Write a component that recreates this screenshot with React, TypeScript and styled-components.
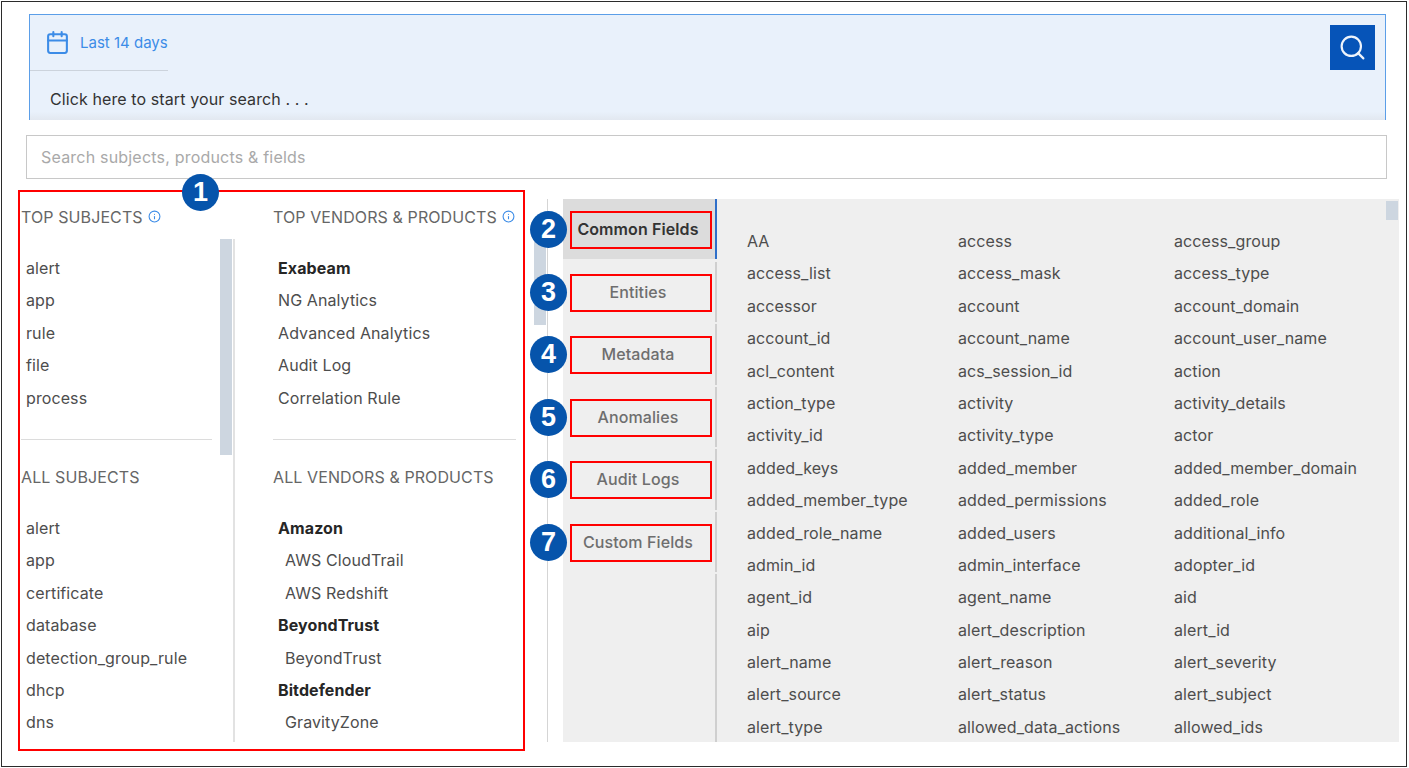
import React from 'react';
import styled, { createGlobalStyle } from 'styled-components';
import { Calendar, Info, Search } from 'lucide-react';

const GlobalStyle = createGlobalStyle`
  * { box-sizing: border-box; }
  html, body { margin: 0; padding: 0; background: #fff; }
  body { font-family: Inter, "Noto Sans", "Liberation Sans", sans-serif; font-size: 16px; letter-spacing: .1px; }
`;

const Frame = styled.div`
  width: 1406px;
  height: 766px;
  margin: 1px;
  padding-top: 12px;
  border: 1px solid #2b2b2b;
  overflow: hidden;
`;

const Header = styled.header`
  display: flex;
  justify-content: space-between;
  align-items: flex-start;
  width: 1357px;
  height: 106px;
  margin-left: 27px;
  border: 1px solid #5b9ee8;
  border-bottom: 0;
  background: linear-gradient(#e9f1fb 92%, #e2e8f0);
`;

const QueryBlock = styled.div`
  display: flex;
  flex-direction: column;
`;

const DateRow = styled.div`
  display: flex;
  align-items: center;
  gap: 10px;
  width: 138px;
  height: 56px;
  padding: 0 0 1px 15px;
  border-bottom: 1px solid #ccd3dc;
  color: #3c8ce7;
  font-size: 15px;
  letter-spacing: 0;
  white-space: nowrap;
`;

const QueryHint = styled.div`
  margin-top: 18px;
  padding-left: 20px;
  color: #333;
  line-height: 21px;
  white-space: nowrap;
`;

const SearchButton = styled.button`
  display: flex;
  align-items: center;
  justify-content: center;
  width: 45px;
  height: 45px;
  margin: 10px 10px 0 0;
  padding: 0;
  border: 0;
  background: #0654b8;
  color: #eef4fb;
`;

const FilterInput = styled.input`
  display: block;
  width: 1361px;
  height: 44px;
  margin: 15px 0 0 24px;
  padding: 0 14px;
  border: 1px solid #c8c8c8;
  outline: 0;
  font: inherit;
  letter-spacing: .2px;
  &::placeholder { color: #a9a9a9; opacity: 1; }
`;

const Body = styled.div`
  display: flex;
  align-items: flex-start;
  margin-top: 11px;
  padding-left: 16px;
`;

const RedBox = styled.section`
  position: relative;
  display: grid;
  grid-template-columns: 215px 1fr;
  flex: none;
  width: 507px;
  height: 561px;
  border: 2px solid #f00;
`;

const Badge = styled.span<{ $x: number; $y: number }>`
  position: absolute;
  left: ${(p) => p.$x}px;
  top: ${(p) => p.$y}px;
  z-index: 2;
  display: flex;
  align-items: center;
  justify-content: center;
  width: 37px;
  height: 37px;
  border-radius: 50%;
  background: #0654ab;
  color: #fff;
  font-family: "Liberation Sans", Arial, sans-serif;
  font-size: 27px;
  font-weight: 700;
  letter-spacing: 0;
  line-height: 1;
`;

const PickerColumn = styled.div<{ $inset: number }>`
  display: flex;
  flex-direction: column;
  min-width: 0;
  padding-left: ${(p) => p.$inset}px;
`;

const TopHeading = styled.h3`
  display: flex;
  align-items: center;
  gap: 5px;
  height: 47px;
  margin: 0;
  padding-top: 2px;
  color: #666;
  font-size: 16px;
  font-weight: 400;
  white-space: nowrap;
  svg { color: #3c8ce7; }
`;

const ScrollArea = styled.div<{ $rule?: boolean }>`
  position: relative;
  height: 503px;
  padding-top: 13px;
  overflow: hidden;
  border-right: ${(p) => (p.$rule ? '2px solid #e2e2e2' : '0')};
`;

const Thumb = styled.div`
  position: absolute;
  top: 0;
  right: 1px;
  width: 12px;
  height: 216px;
  background: #cdd6e0;
`;

const PickRow = styled.div<{ $bold?: boolean; $nested?: boolean }>`
  height: 32.4px;
  padding-left: ${(p) => (p.$nested ? 12 : 5)}px;
  color: ${(p) => (p.$bold ? '#262626' : '#4d4d4d')};
  font-weight: ${(p) => (p.$bold ? 700 : 400)};
  line-height: 32.4px;
  white-space: nowrap;
`;

const Rule = styled.hr<{ $width: number }>`
  width: ${(p) => p.$width}px;
  height: 1px;
  margin: 25px 0 0;
  border: 0;
  background: #dcdcdc;
`;

const AllHeading = styled.h3`
  height: 20px;
  margin: 27px 0 25px;
  color: #666;
  font-size: 16px;
  font-weight: 400;
  line-height: 20px;
  white-space: nowrap;
`;

const MiddleRail = styled.div`
  flex: none;
  width: 14px;
  height: 543px;
  margin: 9px 0 0 9px;
  padding-top: 26px;
  border-right: 1px solid #d5d5d5;
`;

const RailThumb = styled.div`
  width: 12px;
  height: 100px;
  background: #cdd6e0;
`;

const Panel = styled.section`
  position: relative;
  display: flex;
  flex: none;
  width: 836px;
  height: 543px;
  margin: 9px 0 0 15px;
  background: #efefef;
`;

const TabColumn = styled.nav`
  display: flex;
  flex-direction: column;
  flex: none;
  gap: 2.2px;
  width: 154px;
`;

const Tab = styled.div<{ $active?: boolean }>`
  position: relative;
  height: 60.4px;
  padding: 12px 3px 0 7px;
  border-right: 2px solid ${(p) => (p.$active ? '#2f6fc9' : '#cfcfcf')};
  background: ${(p) => (p.$active ? '#dcdcdc' : 'transparent')};
`;

const TabFiller = styled.div`
  flex: 1;
  border-right: 2px solid #cfcfcf;
`;

const TabLabel = styled.div<{ $active?: boolean }>`
  display: flex;
  align-items: center;
  justify-content: center;
  height: 38px;
  padding: 0 6px 2px 0;
  border: 2px solid #f00;
  color: ${(p) => (p.$active ? '#333' : '#6e6e6e')};
  font-weight: ${(p) => (p.$active ? 600 : 500)};
  white-space: nowrap;
`;

const FieldGrid = styled.div`
  display: grid;
  grid-template-columns: 211px 216px 1fr;
  grid-auto-rows: 32.4px;
  flex: 1;
  min-width: 0;
  padding: 26px 0 0 30px;
  overflow: hidden;
`;

const Field = styled.div`
  color: #4d4d4d;
  line-height: 32.4px;
  white-space: nowrap;
`;

const PanelThumb = styled.div`
  position: absolute;
  top: 2px;
  right: 1px;
  width: 12px;
  height: 19px;
  background: #cdd6e0;
`;

const topSubjects = ['alert', 'app', 'rule', 'file', 'process'];
const allSubjects = ['alert', 'app', 'certificate', 'database', 'detection_group_rule', 'dhcp', 'dns'];
const topVendors = [
  { name: 'Exabeam', bold: true },
  { name: 'NG Analytics' },
  { name: 'Advanced Analytics' },
  { name: 'Audit Log' },
  { name: 'Correlation Rule' },
];
const allVendors = [
  { name: 'Amazon', bold: true },
  { name: 'AWS CloudTrail', nested: true },
  { name: 'AWS Redshift', nested: true },
  { name: 'BeyondTrust', bold: true },
  { name: 'BeyondTrust', nested: true },
  { name: 'Bitdefender', bold: true },
  { name: 'GravityZone', nested: true },
];
const tabs = ['Common Fields', 'Entities', 'Metadata', 'Anomalies', 'Audit Logs', 'Custom Fields'];
const fields = [
  'AA', 'access', 'access_group',
  'access_list', 'access_mask', 'access_type',
  'accessor', 'account', 'account_domain',
  'account_id', 'account_name', 'account_user_name',
  'acl_content', 'acs_session_id', 'action',
  'action_type', 'activity', 'activity_details',
  'activity_id', 'activity_type', 'actor',
  'added_keys', 'added_member', 'added_member_domain',
  'added_member_type', 'added_permissions', 'added_role',
  'added_role_name', 'added_users', 'additional_info',
  'admin_id', 'admin_interface', 'adopter_id',
  'agent_id', 'agent_name', 'aid',
  'aip', 'alert_description', 'alert_id',
  'alert_name', 'alert_reason', 'alert_severity',
  'alert_source', 'alert_status', 'alert_subject',
  'alert_type', 'allowed_data_actions', 'allowed_ids',
];

export default function App() {
  return (
    <Frame>
      <GlobalStyle />
      <Header>
        <QueryBlock>
          <DateRow>
            <Calendar size={25} strokeWidth={2} />
            Last 14 days
          </DateRow>
          <QueryHint>Click here to start your search . . .</QueryHint>
        </QueryBlock>
        <SearchButton aria-label="Search">
          <Search size={29} strokeWidth={1.8} />
        </SearchButton>
      </Header>
      <FilterInput placeholder="Search subjects, products & fields" />
      <Body>
        <RedBox>
          <Badge $x={162} $y={-18}>1</Badge>
          <PickerColumn $inset={1}>
            <TopHeading>TOP SUBJECTS <Info size={13} /></TopHeading>
            <ScrollArea $rule>
              <Thumb />
              {topSubjects.map((name) => <PickRow key={name}>{name}</PickRow>)}
              <Rule $width={191} />
              <AllHeading>ALL SUBJECTS</AllHeading>
              {allSubjects.map((name) => <PickRow key={name}>{name}</PickRow>)}
            </ScrollArea>
          </PickerColumn>
          <PickerColumn $inset={38}>
            <TopHeading>TOP VENDORS &amp; PRODUCTS <Info size={13} /></TopHeading>
            <ScrollArea>
              {topVendors.map((v) => <PickRow key={v.name} $bold={v.bold}>{v.name}</PickRow>)}
              <Rule $width={243} />
              <AllHeading>ALL VENDORS &amp; PRODUCTS</AllHeading>
              {allVendors.map((v, i) => <PickRow key={i} $bold={v.bold} $nested={v.nested}>{v.name}</PickRow>)}
            </ScrollArea>
          </PickerColumn>
        </RedBox>
        <MiddleRail>
          <RailThumb />
        </MiddleRail>
        <Panel>
          <TabColumn>
            {tabs.map((name, i) => (
              <Tab key={name} $active={i === 0}>
                <Badge $x={-33} $y={12}>{i + 2}</Badge>
                <TabLabel $active={i === 0}>{name}</TabLabel>
              </Tab>
            ))}
            <TabFiller />
          </TabColumn>
          <FieldGrid>
            {fields.map((name) => <Field key={name}>{name}</Field>)}
          </FieldGrid>
          <PanelThumb />
        </Panel>
      </Body>
    </Frame>
  );
}
